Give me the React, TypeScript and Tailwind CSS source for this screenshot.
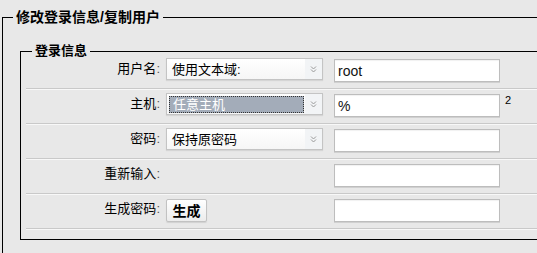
import React from "react";

const font = { fontFamily: '"Liberation Sans", "Noto Sans CJK SC", sans-serif' };

function Chevrons() {
  return (
    <svg width="7" height="8" viewBox="0 0 7 8" fill="none" stroke="#9a9a9a" strokeWidth="1">
      <path d="M1 1.5 L3.5 4 L6 1.5" />
      <path d="M1 4.5 L3.5 7 L6 4.5" />
    </svg>
  );
}

function Select({ text, focused }: { text: string; focused?: boolean }) {
  return (
    <div className="mt-[4px] w-[157px] h-[22px] border border-[#c4c4c4] bg-gradient-to-b from-white to-[#f6f6f6] flex items-center shadow-[0_1px_1px_rgba(0,0,0,0.08)]">
      {focused ? (
        <div className="ml-[2px] w-[135px] h-[17px] bg-[#a3acb9] border border-dotted border-[#333] flex items-center text-white text-[13px] pl-[3px] leading-none">
          {text}
        </div>
      ) : (
        <span className="pl-[5px] text-[13px] text-black leading-none">{text}</span>
      )}
      <span className="ml-auto w-[17px] h-full flex items-center justify-center bg-[#f2f4f6]">
        <Chevrons />
      </span>
    </div>
  );
}

function Input({ value }: { value?: string }) {
  return (
    <div className="mt-[5px] w-[166px] h-[23px] border border-[#bdbdbd] bg-white shadow-[inset_0_1px_1px_rgba(0,0,0,0.06),0_1px_0_#d0d0d0] flex items-center pl-[3px] text-[14px] text-[#111] leading-none">
      {value}
    </div>
  );
}

function Label({ text }: { text: string }) {
  return (
    <div className="w-[134px] text-right text-[13px] leading-[16px] mt-[7px] text-black">
      {text}
      <span className="text-[#555]">:</span>
    </div>
  );
}

const rowCls = "flex items-start h-[35px] border-b border-[#c9c9c9] shadow-[0_1px_0_#f8f8f8]";

export default function App() {
  return (
    <div className="w-[537px] h-[253px] overflow-hidden bg-[#e8e8e8]" style={font}>
      <fieldset className="mt-[8px] ml-[2px] w-[620px] border border-black p-0 pb-[60px]">
        <legend className="ml-[10px] px-[3px] text-[14px] leading-[18px] font-bold text-black">
          修改登录信息/复制用户
        </legend>
        <div className="pl-[17px] mt-[16px]">
          <fieldset className="border border-black p-0 pb-[10px]">
            <legend className="ml-[11px] px-[3px] text-[13px] leading-[18px] font-bold text-black">
              登录信息
            </legend>
            <div className="-mt-[6px] ml-[5px]">
              <div className={rowCls}>
                <Label text="用户名" />
                <div className="ml-[6px]"><Select text="使用文本域:" /></div>
                <div className="ml-[11px]"><Input value="root" /></div>
              </div>
              <div className={rowCls}>
                <Label text="主机" />
                <div className="ml-[6px]"><Select text="任意主机" focused /></div>
                <div className="ml-[11px]"><Input value="%" /></div>
                <span className="ml-[5px] mt-[6px] text-[11px] leading-none text-black">2</span>
              </div>
              <div className={rowCls}>
                <Label text="密码" />
                <div className="ml-[6px]"><Select text="保持原密码" /></div>
                <div className="ml-[11px]"><Input /></div>
              </div>
              <div className={rowCls}>
                <Label text="重新输入" />
                <div className="ml-[6px] w-[157px]" />
                <div className="ml-[11px]"><Input /></div>
              </div>
              <div className={rowCls}>
                <Label text="生成密码" />
                <div className="ml-[6px] w-[157px]">
                  <button className="mt-[5px] w-[41px] h-[23px] border border-[#c2c2c2] rounded-[2px] bg-gradient-to-b from-white to-[#ececec] text-[14px] font-bold text-black leading-none shadow-[0_1px_1px_rgba(0,0,0,0.1)]">
                    生成
                  </button>
                </div>
                <div className="ml-[11px]"><Input /></div>
              </div>
            </div>
          </fieldset>
        </div>
      </fieldset>
    </div>
  );
}
